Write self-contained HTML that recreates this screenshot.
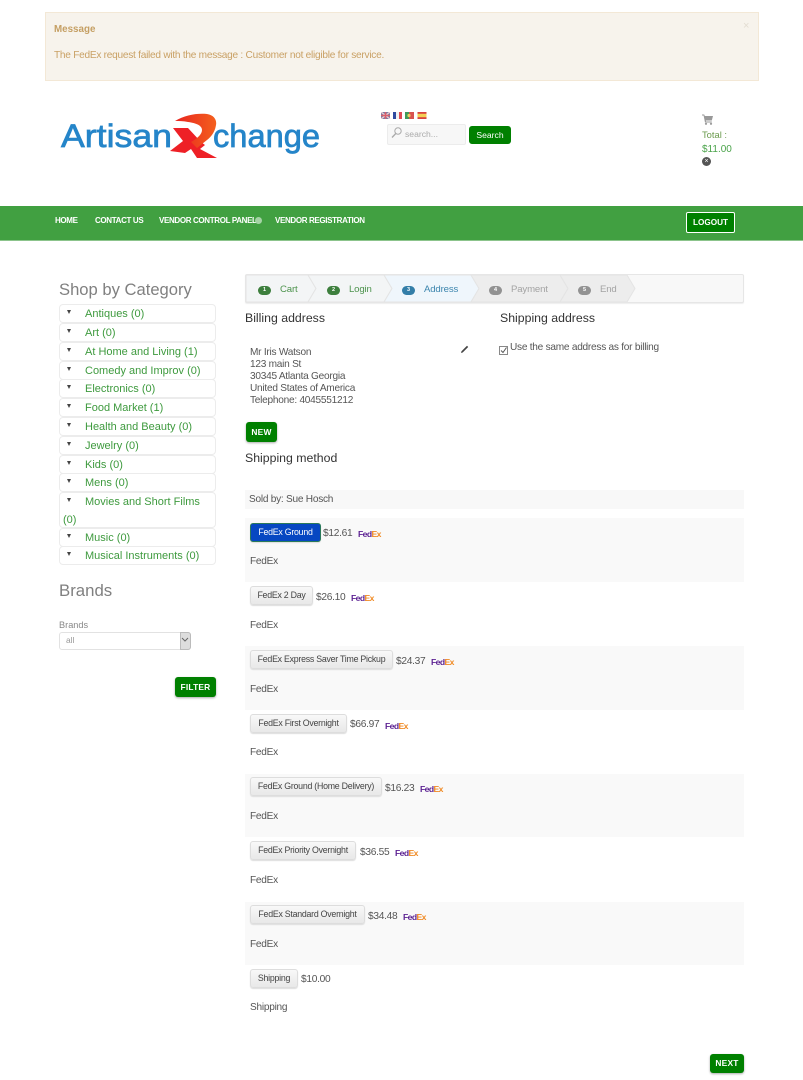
<!DOCTYPE html>
<html><head><meta charset="utf-8"><style>
html,body{margin:0;padding:0;background:#fff}
#p{position:relative;width:803px;height:1080px;overflow:hidden;font-family:"Liberation Sans",sans-serif;font-size:10px;color:#555;filter:blur(.3px)}
#p div,#p span.a,#p svg{position:absolute;white-space:nowrap}
.cat{left:59px;width:155px;height:16.5px;border:1px solid #ececec;border-radius:4px;background:#fff}
.cat b{position:absolute;left:7px;top:5px;width:0;height:0;border-left:2.5px solid transparent;border-right:2.5px solid transparent;border-top:4px solid #444}
.cat span{position:absolute;left:25px;top:2px;font-size:11px;line-height:15px;color:#3e9a3e}
.btn{height:17px;border:1px solid #ddd;border-radius:3px;background:linear-gradient(#f8f8f8,#e8e8e8);box-shadow:0 1px 1px #ddd;font-size:8.8px;letter-spacing:-.25px;line-height:17px;text-align:center;color:#444}
.pr{font-size:10.2px;letter-spacing:-.3px;color:#555;line-height:12px}
.fx{font-size:8.6px;font-weight:bold;letter-spacing:-.6px;line-height:10px;color:#5a1f91}
.fx i{font-style:normal;color:#f08a24}
.t{font-size:10.1px;letter-spacing:-.25px;color:#555;line-height:12px}
.gb{background:#008000;border-radius:3px;color:#fff;font-weight:bold;font-size:8.4px;text-align:center;box-shadow:0 1px 2px #aaa;letter-spacing:.2px}
.nav{top:215px;color:#fff;font-weight:bold;font-size:8px;line-height:12px;letter-spacing:-.35px}
.st{top:284px;font-size:9.6px;letter-spacing:-.15px;line-height:12px}
.no{top:286px;width:13px;height:9px;border-radius:5px;color:#fff;font-size:5.5px;line-height:9px;text-align:center;font-weight:bold}
.h{font-size:12.3px;color:#333;line-height:15px}
</style></head><body><div id="p">
<div style="left:45px;top:12px;width:712px;height:67px;background:#f7f3ec;border:1px solid #f3e8d6"></div>
<div style="left:54px;top:23px;font-size:9.8px;font-weight:bold;line-height:13px;color:#c59f63">Message</div>
<div style="left:54px;top:49px;font-size:10.1px;letter-spacing:-.25px;line-height:13px;color:#c9a064">The FedEx request failed with the message : Customer not eligible for service.</div>
<div style="left:743px;top:20px;font-size:11px;line-height:13px;color:#e3ddd2">×</div>

<svg style="left:55px;top:108px" width="275" height="55" viewBox="0 0 275 55">
<defs><linearGradient id="g" x1="0" y1="0" x2="1" y2="0"><stop offset="0" stop-color="#e8241f"/><stop offset="1" stop-color="#f4601e"/></linearGradient></defs>
<text x="6" y="39" font-family="Liberation Sans" font-size="32" stroke="#2585c9" stroke-width=".7" textLength="111" lengthAdjust="spacingAndGlyphs" fill="#2585c9">Artisan</text>
<text x="158" y="39" font-family="Liberation Sans" font-size="32" stroke="#2585c9" stroke-width=".7" textLength="107" lengthAdjust="spacingAndGlyphs" fill="#2585c9">change</text>
<path d="M118 20H133L146 34L150 37L145 41L162 50H142L136 41L130 45L115 43L128 33Z" fill="#ee2026"/>
<path d="M120 13C130 7 142 5 152 6C159 7 162 12 161 17C160 24 156 29 152 32L142 40L136 34C143 30 147 26 147 22C147 17 140 15 133 14C128 13 124 13 120 13Z" fill="url(#g)"/>
</svg>

<svg style="left:381px;top:112px" width="47" height="7" viewBox="0 0 47 7">
<rect x="0" y="0" width="9" height="7" rx="1" fill="#6d7eaa"/><path d="M0 0L9 7M9 0L0 7" stroke="#eecdd0" stroke-width="1.4"/><path d="M4.5 0V7M0 3.5H9" stroke="#d8606c" stroke-width="1.6"/>
<rect x="12" y="0" width="3" height="7" fill="#2f4aa0"/><rect x="15" y="0" width="3" height="7" fill="#f2f2f2"/><rect x="18" y="0" width="3" height="7" fill="#df4a52"/>
<rect x="24" y="0" width="4" height="7" fill="#3f9a5a"/><rect x="28" y="0" width="5" height="7" fill="#d9534f"/><circle cx="28" cy="3.5" r="1.6" fill="#ecd060"/>
<rect x="36.500" y="0" width="9" height="7" fill="#d9443e"/><rect x="36.500" y="1.800" width="9" height="3.400" fill="#f4cf55"/>
</svg>

<div style="left:387px;top:124px;width:77px;height:19px;background:#f7f7f7;border:1px solid #ececec;border-radius:2px"></div>
<svg style="left:391px;top:127px" width="11" height="12" viewBox="0 0 11 12"><circle cx="7" cy="4" r="3.200" fill="none" stroke="#aaa"/><path d="M4.800 6.500L1 10.500" stroke="#aaa" stroke-width="1.300"/></svg>
<div style="left:405px;top:128px;font-size:8.6px;line-height:12px;color:#aaa">search...</div>
<div style="left:469px;top:126px;width:42px;height:18px;background:#008000;border-radius:3px;color:#fff;font-size:8.6px;line-height:18px;text-align:center">Search</div>

<svg style="left:702px;top:114px" width="11" height="11" viewBox="0 0 11 11"><path d="M0 0.500H2.200L2.800 2H11L9.800 6.500H3.800L4 7.500H9.800V8.500H3L1.600 1.500H0Z" fill="#999"/><circle cx="4" cy="9.800" r="1.100" fill="#999"/><circle cx="9" cy="9.800" r="1.100" fill="#999"/></svg>
<div style="left:702px;top:128px;font-size:9.4px;line-height:13px;color:#6b9b4d">Total :</div>
<div style="left:702px;top:143px;font-size:10px;line-height:13px;color:#4aa34a">$11.00</div>
<div style="left:702px;top:157px;width:9px;height:9px;border-radius:50%;background:#555;color:#fff;font-size:7px;line-height:9px;text-align:center">×</div>

<div style="left:0;top:206px;width:803px;height:34px;background:#41a041;border-bottom:1px solid #8cc48c"></div>
<div class="nav" style="left:55px">HOME</div>
<div class="nav" style="left:95px">CONTACT US</div>
<div class="nav" style="left:159px">VENDOR CONTROL PANEL</div>
<div style="left:255px;top:217px;width:7px;height:7px;border-radius:50%;background:#a5d3a5"></div>
<div class="nav" style="left:275px">VENDOR REGISTRATION</div>
<div style="left:686px;top:212px;width:47px;height:19px;background:#008000;border:1px solid #fff;border-radius:2px;color:#fff;font-weight:bold;font-size:8.2px;line-height:19px;text-align:center">LOGOUT</div>

<div style="left:59px;top:280px;font-size:16.6px;line-height:20px;color:#808080">Shop by Category</div>
<div class="cat" style="top:304px"><b></b><span>Antiques (0)</span></div>
<div class="cat" style="top:323px"><b></b><span>Art (0)</span></div>
<div class="cat" style="top:342px"><b></b><span>At Home and Living (1)</span></div>
<div class="cat" style="top:361px"><b></b><span>Comedy and Improv (0)</span></div>
<div class="cat" style="top:379px"><b></b><span>Electronics (0)</span></div>
<div class="cat" style="top:398px"><b></b><span>Food Market (1)</span></div>
<div class="cat" style="top:417px"><b></b><span>Health and Beauty (0)</span></div>
<div class="cat" style="top:436px"><b></b><span>Jewelry (0)</span></div>
<div class="cat" style="top:455px"><b></b><span>Kids (0)</span></div>
<div class="cat" style="top:473px"><b></b><span>Mens (0)</span></div>
<div class="cat" style="top:492px;height:34px"><b></b><span>Movies and Short Films</span><span style="left:3px;top:20px">(0)</span></div>
<div class="cat" style="top:528px"><b></b><span>Music (0)</span></div>
<div class="cat" style="top:546px"><b></b><span>Musical Instruments (0)</span></div>

<div style="left:59px;top:581px;font-size:16.8px;line-height:20px;color:#808080">Brands</div>
<div style="left:59px;top:619px;font-size:9.2px;line-height:12px;color:#888">Brands</div>
<div style="left:59px;top:632px;width:130px;height:16px;border:1px solid #e2e2e2;border-radius:3px;background:#fff"></div>
<div style="left:66px;top:634px;font-size:8.4px;line-height:12px;color:#999">all</div>
<div style="left:180px;top:632px;width:9px;height:16px;background:#ddd;border:1px solid #bbb;border-radius:0 3px 3px 0"></div>
<svg style="left:181px;top:637px" width="8" height="6" viewBox="0 0 8 6"><path d="M1 1L4 4L7 1" fill="none" stroke="#666"/></svg>
<div class="gb" style="left:175px;top:677px;width:41px;height:20px;line-height:20px">FILTER</div>

<div style="left:245px;top:274px;width:497px;height:27px;background:#f8f8f8;border:1px solid #e6e6e6;border-radius:2px;box-shadow:0 1px 1px #eee"></div>
<svg style="left:246px;top:275px" width="400" height="27" viewBox="0 0 400 27">
<path d="M0 0H62L70 13.500L62 27H0Z" fill="#f3f5f6" stroke="#e4e4e4"/>
<path d="M62 0H138L146 13.500L138 27H62L70 13.500Z" fill="#f3f5f6" stroke="#e4e4e4"/>
<path d="M138 0H225L233 13.500L225 27H138L146 13.500Z" fill="#eff6fc" stroke="#e4e4e4"/>
<path d="M225 0H314L322 13.500L314 27H225L233 13.500Z" fill="#ededed" stroke="#e4e4e4"/>
<path d="M314 0H381L389 13.500L381 27H314L322 13.500Z" fill="#ededed" stroke="#e4e4e4"/>
</svg>
<div class="no" style="left:258px;background:#3d7f3d">1</div><div class="st" style="left:280px;color:#4d934d">Cart</div>
<div class="no" style="left:327px;background:#3d7f3d">2</div><div class="st" style="left:349px;color:#4d934d">Login</div>
<div class="no" style="left:402px;background:#337ea8">3</div><div class="st" style="left:424px;color:#3d86ae">Address</div>
<div class="no" style="left:489px;background:#929292">4</div><div class="st" style="left:511px;color:#a3a3a3">Payment</div>
<div class="no" style="left:578px;background:#929292">5</div><div class="st" style="left:600px;color:#a3a3a3">End</div>

<div class="h" style="left:245px;top:311px">Billing address</div>
<div class="h" style="left:500px;top:311px">Shipping address</div>
<div class="t" style="left:250px;top:347px">Mr Iris Watson</div>
<div class="t" style="left:250px;top:359px">123 main St</div>
<div class="t" style="left:250px;top:371px">30345 Atlanta Georgia</div>
<div class="t" style="left:250px;top:383px">United States of America</div>
<div class="t" style="left:250px;top:395px">Telephone: 4045551212</div>
<svg style="left:460px;top:344px" width="10" height="10" viewBox="0 0 10 10"><path d="M1 9L1.500 7.300L7 1.800L8.200 3L2.700 8.500Z" fill="#444"/></svg>
<svg style="left:499px;top:346px" width="9" height="9" viewBox="0 0 9 9"><rect x=".5" y=".5" width="8" height="8" fill="#fff" stroke="#888"/><path d="M2 4.500L4 6.500L7.500 1.500" fill="none" stroke="#555"/></svg>
<div class="t" style="left:510px;top:342px">Use the same address as for billing</div>
<div class="gb" style="left:246px;top:422px;width:31px;height:20px;line-height:20px">NEW</div>
<div class="h" style="left:245px;top:451px">Shipping method</div>

<div style="left:245px;top:490px;width:499px;height:19px;background:#f8f8f8"></div>
<div class="t" style="left:249px;top:494px">Sold by: Sue Hosch</div>

<div style="left:245px;top:518px;width:499px;height:64px;background:#f9f9f9"></div>
<div style="left:245px;top:646px;width:499px;height:64px;background:#f9f9f9"></div>
<div style="left:245px;top:774px;width:499px;height:63px;background:#f9f9f9"></div>
<div style="left:245px;top:902px;width:499px;height:63px;background:#f9f9f9"></div>

<div class="btn" style="left:250px;top:523px;width:69px;background:#0647c2;border-color:#2a7a5a;color:#fff">FedEx Ground</div>
<div class="pr" style="left:323px;top:528px">$12.61</div>
<div class="fx" style="left:358px;top:529px">Fed<i>Ex</i></div>
<div class="t" style="left:250px;top:556px">FedEx</div>

<div class="btn" style="left:250px;top:586px;width:61px">FedEx 2 Day</div>
<div class="pr" style="left:316px;top:592px">$26.10</div>
<div class="fx" style="left:351px;top:593px">Fed<i>Ex</i></div>
<div class="t" style="left:250px;top:620px">FedEx</div>

<div class="btn" style="left:250px;top:650px;width:141px">FedEx Express Saver Time Pickup</div>
<div class="pr" style="left:396px;top:656px">$24.37</div>
<div class="fx" style="left:431px;top:657px">Fed<i>Ex</i></div>
<div class="t" style="left:250px;top:684px">FedEx</div>

<div class="btn" style="left:250px;top:714px;width:95px">FedEx First Overnight</div>
<div class="pr" style="left:350px;top:719px">$66.97</div>
<div class="fx" style="left:385px;top:721px">Fed<i>Ex</i></div>
<div class="t" style="left:250px;top:747px">FedEx</div>

<div class="btn" style="left:250px;top:777px;width:130px">FedEx Ground (Home Delivery)</div>
<div class="pr" style="left:385px;top:783px">$16.23</div>
<div class="fx" style="left:420px;top:784px">Fed<i>Ex</i></div>
<div class="t" style="left:250px;top:811px">FedEx</div>

<div class="btn" style="left:250px;top:841px;width:104px">FedEx Priority Overnight</div>
<div class="pr" style="left:360px;top:847px">$36.55</div>
<div class="fx" style="left:395px;top:848px">Fed<i>Ex</i></div>
<div class="t" style="left:250px;top:875px">FedEx</div>

<div class="btn" style="left:250px;top:905px;width:113px">FedEx Standard Overnight</div>
<div class="pr" style="left:368px;top:911px">$34.48</div>
<div class="fx" style="left:403px;top:912px">Fed<i>Ex</i></div>
<div class="t" style="left:250px;top:939px">FedEx</div>

<div class="btn" style="left:250px;top:969px;width:46px">Shipping</div>
<div class="pr" style="left:301px;top:974px">$10.00</div>
<div class="t" style="left:250px;top:1002px">Shipping</div>

<div class="gb" style="left:710px;top:1054px;width:34px;height:19px;line-height:19px">NEXT</div>
</div></body></html>
